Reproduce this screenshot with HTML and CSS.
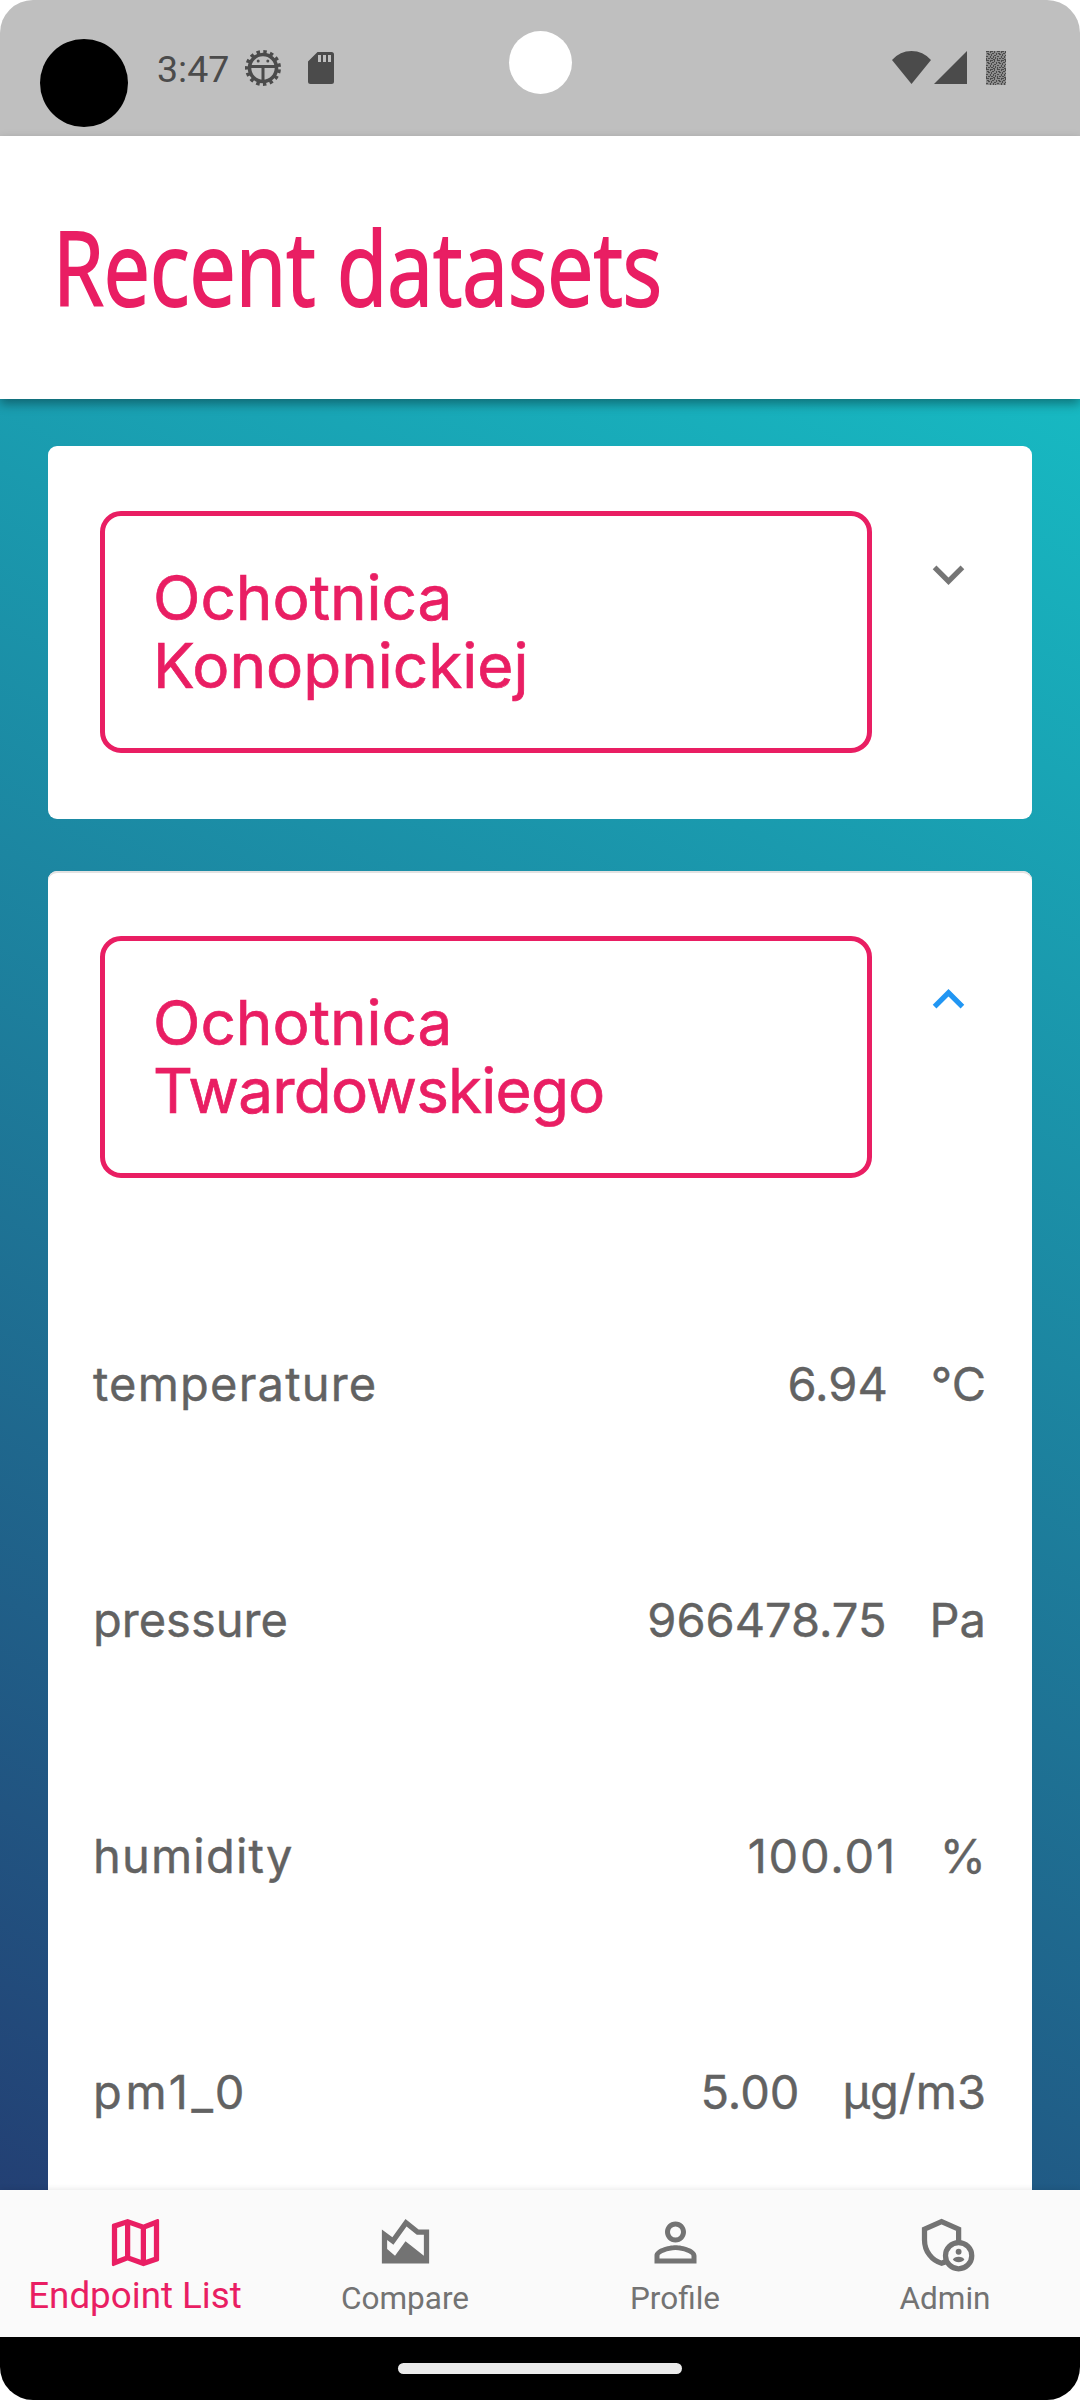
FILE: index.html
```html
<!DOCTYPE html>
<html lang="en">
<head>
<meta charset="utf-8">
<title>Recent datasets</title>
<link rel="stylesheet" href="styles.css">
</head>
<body>
<div class="phone">
  <div class="status">
    <span class="avatar"></span>
    <span class="time">3:47</span>
    <svg class="bug" viewBox="-19 -19 38 38" width="38" height="38">
      <circle r="13.500" fill="none" stroke="#4b4b4b" stroke-width="3.600"/>
      <circle r="16" fill="none" stroke="#4b4b4b" stroke-width="4" stroke-linecap="butt" stroke-dasharray="3.400 3.302" stroke-dashoffset="-1.500"/>
      <path d="M-13-1.500H13M0-1.500V13" stroke="#4b4b4b" stroke-width="3"/>
      <circle cx="-4.800" cy="-7" r="1.500" fill="#4b4b4b"/><circle cx="4.800" cy="-7" r="1.500" fill="#4b4b4b"/>
    </svg>
    <svg class="sd" viewBox="0 0 26 32" width="26" height="32"><path fill="#4b4b4b" fill-rule="evenodd" d="M9.500 0H23.500Q26 0 26 2.500V29.500Q26 32 23.500 32H2.500Q0 32 0 29.500V9.500ZM10 3V10H13V3ZM15 3V10H18V3ZM20 3V10H23V3Z"/></svg>
    <span class="camera"></span>
    <svg class="signals" viewBox="0 0 114 34" width="114" height="34">
      <path fill="#4b4b4b" d="M0 9Q8 0 19.500 0T39 9L19.500 33ZM75 0V33H42Z"/>
      <defs>
        <pattern id="grain" width="11" height="9" patternUnits="userSpaceOnUse">
          <path fill="#4b4b4b" d="M0 0h2v1h-2zM3 0h1v2h-1zM6 0h3v1h-3zM10 0h1v2h-1zM1 2h2v1h-2zM5 2h1v2h-1zM7 2h2v1h-2zM0 3h1v2h-1zM3 4h2v1h-2zM6 5h2v1h-2zM8 3h2v1h-2zM10 5h1v2h-1zM2 5h1v2h-1zM4 6h1v2h-1zM0 7h2v1h-2zM6 7h1v2h-1zM8 7h2v1h-2zM2 8h2v1h-2z"/>
        </pattern>
      </defs>
      <path fill="#8c8c8c" d="M94 0h20v34H94z"/><path fill="url(#grain)" d="M94 0h20v34H94z"/>
    </svg>
  </div>
  <header class="header"><h1 class="title">Recent datasets</h1></header>
  <main class="content">
    <section class="card">
      <div class="card-head">
        <h2 class="name">Ochotnica<br>Konopnickiej</h2>
        <svg class="chevron" viewBox="0 0 24 24"><path fill="#757575" d="M16.590 8.590L12 13.170 7.410 8.590 6 10l6 6 6-6z"/></svg>
      </div>
    </section>
    <section class="card open">
      <div class="card-head">
        <h2 class="name">Ochotnica<br><span class="tight">Twardowskiego</span></h2>
        <svg class="chevron" viewBox="0 0 24 24"><path fill="#2196f3" d="M12 8l-6 6 1.410 1.410L12 10.830l4.590 4.580L18 14z"/></svg>
      </div>
      <div class="rows">
        <div class="row"><span class="label loose">temperature</span><span class="value">6.94</span><span class="unit">°C</span></div>
        <div class="row"><span class="label">pressure</span><span class="value">966478.75</span><span class="unit">Pa</span></div>
        <div class="row"><span class="label loose">humidity</span><span class="value wide">100.01</span><span class="unit">%</span></div>
        <div class="row"><span class="label widest">pm1_0</span><span class="value">5.00</span><span class="unit">µg/m3</span></div>
      </div>
    </section>
  </main>
  <nav class="nav">
    <a class="tab active"><svg class="icon" viewBox="0 0 24 24"><path fill="currentColor" d="M20.500 3l-.16.030L15 5.100 9 3 3.360 4.900c-.21.070-.36.250-.36.480V20.500c0 .28.220.5.5.5l.16-.030L9 18.900l6 2.100 5.640-1.900c.21-.070.36-.25.36-.48V3.500c0-.28-.22-.5-.5-.5zM10 5.470l4 1.400v11.660l-4-1.400V5.470zm-5 .99l3-1.010v11.700l-3 1.160V6.460zm14 11.080l-3 1.010V6.860l3-1.160v11.840z"/></svg><span>Endpoint List</span></a>
    <a class="tab"><svg class="icon" viewBox="0 0 24 24"><path fill="currentColor" fill-rule="evenodd" d="M3 7l4 3 5-7 5 4h4v13H3zM5 11v3.500L8 17l4-5.500 7 5.500V9h-2.700L12.400 5.880 7.400 12.880z"/></svg><span>Compare</span></a>
    <a class="tab"><svg class="icon" viewBox="0 0 24 24"><path fill="currentColor" d="M12 5.900a2.100 2.100 0 1 1 0 4.200 2.100 2.100 0 0 1 0-4.200m0 9c2.970 0 6.100 1.460 6.100 2.100v1.100H5.900V17c0-.64 3.130-2.100 6.100-2.100M12 4C9.790 4 8 5.790 8 8s1.790 4 4 4 4-1.790 4-4-1.790-4-4-4zm0 9c-2.670 0-8 1.340-8 4v3h16v-3c0-2.660-5.330-4-8-4z"/></svg><span>Profile</span></a>
    <a class="tab"><svg class="icon" viewBox="0 0 24 24"><path fill="none" stroke="currentColor" stroke-width="2" d="M17 11.500V6.900L10.500 4 4 6.900V11c0 4.300 2.800 7.900 6.500 8.900q1-.3 2-.9"/><circle cx="17" cy="17" r="5" fill="none" stroke="currentColor" stroke-width="2"/><circle cx="17" cy="15.500" r="1.120" fill="currentColor"/><path fill="currentColor" d="M14.800 18.500c.2-.7 1.200-1.100 2.200-1.100s2 .4 2.200 1.100c-.5.700-1.300 1-2.200 1s-1.700-.3-2.200-1z"/></svg><span>Admin</span></a>
  </nav>
  <div class="gesture"><span class="pill"></span></div>
</div>
</body>
</html>
```
FILE: styles.css
```css
* { box-sizing: border-box; }
body { margin: 0; background: #fff; font-family: Inter, sans-serif; }
.phone { width: 1080px; height: 2400px; display: flex; flex-direction: column; overflow: hidden; border-radius: 33px; }

.status { position: relative; flex: none; height: 136px; background: #bfbfbf; display: flex; align-items: flex-start; font-family: Roboto, sans-serif; }
.avatar { width: 88px; height: 88px; margin: 39px 0 0 40px; border-radius: 50%; background: #000; }
.time { width: 72px; margin: 47px 0 0 29px; font-size: 37.500px; line-height: 44px; color: #4b4b4b; }
.bug { margin: 49px 0 0 15px; }
.sd { margin: 52px 0 0 26px; }
.camera { position: absolute; left: 509px; top: 31px; width: 63px; height: 63px; border-radius: 50%; background: #fff; }
.signals { margin: 51px 74px 0 auto; }

.header { position: relative; z-index: 1; flex: none; height: 263px; padding: 0 53px; display: flex; align-items: center; background: #fff; box-shadow: 0 5px 10px rgba(0, 0, 0, .36); }
.title { margin: -1px 0 0; font: 400 102px/120px "Open Sans", sans-serif; color: #e91e63; white-space: nowrap; -webkit-text-stroke: 2px #e91e63; transform: scaleX(.807); transform-origin: left; }

.content { flex: 1; min-height: 0; overflow: hidden; padding: 47px 48px 0; display: flex; flex-direction: column; gap: 52px; background: linear-gradient(206deg, #17b9c2, #234074); }
.card { flex: none; height: 373px; padding: 65px 52px 0; border-radius: 9px; background: #fff; }
.card.open { height: 1500px; box-shadow: inset 0 2px 0 #e2e2e2; }
.card-head { display: flex; }
.name { width: 772px; height: 242px; margin: 0; padding: 48px 48px 0; border: 5px solid #e91e63; border-radius: 21px; font-size: 62px; line-height: 68px; font-weight: 400; color: #e91e63; -webkit-text-stroke: .7px #e91e63; }
.tight { letter-spacing: -.8px; }
.chevron { width: 63px; height: 63px; margin: 32px 0 0 45px; }

.rows { margin: 88px -6px 0 -7px; }
.row { height: 236px; display: flex; align-items: center; font-size: 47px; line-height: 56px; font-weight: 400; color: #626262; -webkit-text-stroke: .4px #626262; }
.loose { letter-spacing: 1.200px; }
.wide { letter-spacing: 1.800px; }
.widest { letter-spacing: 3.800px; }
.value { margin-left: auto; }
.unit { margin-left: 43px; }

.nav { position: relative; z-index: 1; flex: none; height: 147px; display: flex; background: #fafafa; box-shadow: 0 -1px 6px rgba(0, 0, 0, .09); font-family: Roboto, sans-serif; }
.tab { width: 270px; padding: 21px 0 0; display: flex; flex-direction: column; align-items: center; color: #737373; font-size: 31.500px; line-height: 37px; }
.tab span { margin-top: 6px; }
.active { color: #e91e63; font-size: 36.750px; }
.active span { margin-top: 3px; }
.icon { width: 63px; height: 63px; overflow: visible; }
.gesture { flex: none; height: 63px; display: flex; justify-content: center; padding-top: 26px; background: #000; }
.pill { width: 284px; height: 11px; border-radius: 6px; background: #ebebeb; }
```
